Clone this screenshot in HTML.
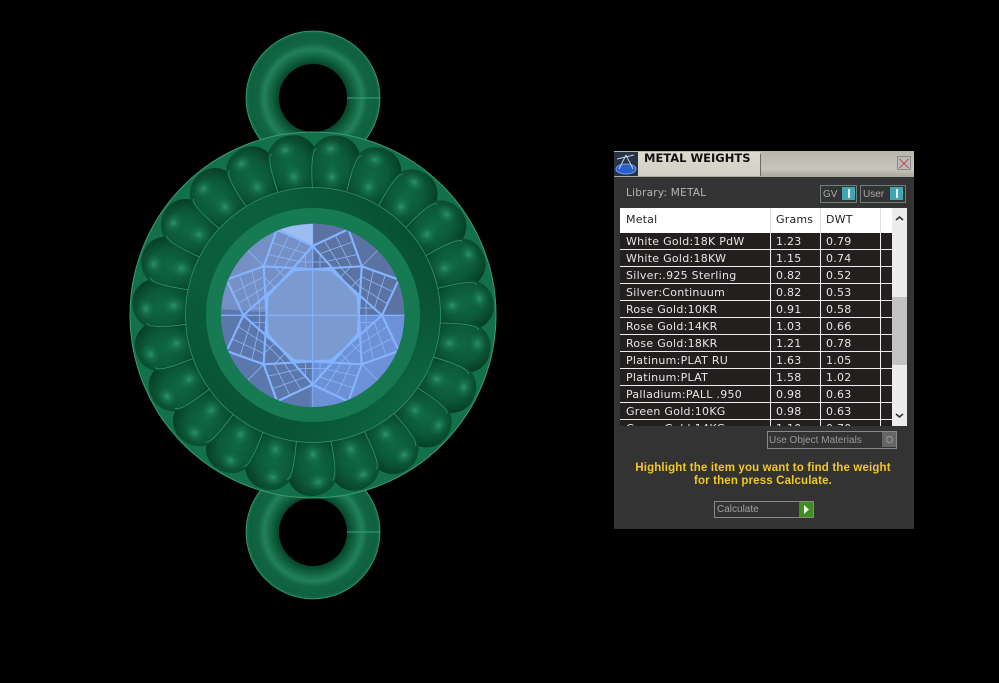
<!DOCTYPE html>
<html><head><meta charset="utf-8"><style>
html,body{margin:0;padding:0;background:#000;width:999px;height:683px;overflow:hidden}
.a{position:absolute}
#p{left:614px;top:151px;width:300px;height:378px;background:#333;font-family:"DejaVu Sans",sans-serif;overflow:hidden}
.t{position:absolute;white-space:nowrap;line-height:14px}
.r{position:absolute;left:6px;width:272px;height:16px;background:#231f1e;border-bottom:1px solid #eee;color:#e6e6e6;font-size:11px;line-height:16px;letter-spacing:.27px}
.r span{position:absolute;top:1px;white-space:nowrap}
.r i{position:absolute;top:0;width:1px;height:17px;background:#eee}
</style></head><body>
<svg class="a" style="left:0;top:0" width="999" height="683" viewBox="0 0 999 683">
<defs>
<radialGradient id="tor1" cx="313" cy="98" r="67" gradientUnits="userSpaceOnUse">
<stop offset=".5" stop-color="#06422a"/><stop offset=".6" stop-color="#0e5f3e"/><stop offset=".73" stop-color="#23815a"/><stop offset=".82" stop-color="#116545"/><stop offset=".95" stop-color="#0e6040"/><stop offset="1" stop-color="#14744c"/>
</radialGradient>
<radialGradient id="tor2" cx="313" cy="532" r="67" gradientUnits="userSpaceOnUse">
<stop offset=".5" stop-color="#06422a"/><stop offset=".6" stop-color="#0e5f3e"/><stop offset=".73" stop-color="#23815a"/><stop offset=".82" stop-color="#116545"/><stop offset=".95" stop-color="#0e6040"/><stop offset="1" stop-color="#14744c"/>
</radialGradient>
<radialGradient id="bd" cx=".42" cy=".47" r=".66">
<stop offset="0" stop-color="#0f6843"/><stop offset=".5" stop-color="#0c5a39"/><stop offset=".8" stop-color="#07452b"/><stop offset="1" stop-color="#04331e"/>
</radialGradient>
<radialGradient id="hl"><stop offset="0" stop-color="#2f9a70" stop-opacity=".9"/><stop offset=".5" stop-color="#1f8058" stop-opacity=".45"/><stop offset="1" stop-color="#1a7a50" stop-opacity="0"/></radialGradient>
<linearGradient id="bz" x1="0" y1="0" x2="1" y2="1">
<stop offset="0" stop-color="#0b5f3c"/><stop offset=".45" stop-color="#0b5f3c"/><stop offset=".7" stop-color="#0a5836"/><stop offset="1" stop-color="#11734a"/>
</linearGradient>
<linearGradient id="bz2" x1="1" y1="0" x2="0" y2="1">
<stop offset="0" stop-color="#043c25" stop-opacity=".95"/><stop offset=".45" stop-color="#0b5f3c" stop-opacity="0"/><stop offset="1" stop-color="#05452b" stop-opacity=".8"/>
</linearGradient>
<linearGradient id="bi" x1="0" y1="0" x2="1" y2="1">
<stop offset="0" stop-color="#177a52"/><stop offset=".6" stop-color="#167a52"/><stop offset="1" stop-color="#15754e"/>
</linearGradient>
<clipPath id="ann"><circle cx="313" cy="315" r="181"/></clipPath>
<clipPath id="wedge"><path d="M313 315L274 18L141 69Z"/></clipPath>
<clipPath id="gc"><circle cx="0" cy="0" r="275"/></clipPath>
<g id="b">
<g transform="rotate(-11 313 160)">
<rect x="288" y="134" width="50" height="62" rx="24" fill="url(#bd)"/>
<ellipse cx="309" cy="147" rx="11" ry="9" fill="url(#hl)"/>
<ellipse cx="309" cy="175" rx="10" ry="11" fill="url(#hl)"/>
<path d="M295 146 Q288 148 289 192" fill="none" stroke="#2f9a70" stroke-width=".8"/>
</g>
</g>
<g id="sec" fill="none" stroke="#84b4ff">
<g stroke-width="6.5">
<path d="M0-208 L137-54 M0-208 L-137-54 M0-208 L102-256 M0-208 L-102-256"/>
</g>
<g stroke-width="2.4" stroke="#8cb6f6">
<path d="M0-208V-275"/>
<path d="M34-224L87-141 M68-240L117-144 M19-184L117-219 M38-161L132-182"/>
<path d="M-22-138V-186 M22-138V-186 M-45-160H45"/>
</g>
</g>
</defs>

<!-- top and bottom loops -->
<circle cx="313" cy="98" r="67" fill="url(#tor1)" stroke="#3f9a72" stroke-width=".8"/>
<circle cx="313" cy="98" r="34" fill="#000"/>
<path d="M347 98H380" stroke="#3f9d74" stroke-width="1"/>
<circle cx="313" cy="532" r="67" fill="url(#tor2)" stroke="#3f9a72" stroke-width=".8"/>
<circle cx="313" cy="532" r="34" fill="#000"/>
<path d="M347 532H380" stroke="#3f9d74" stroke-width="1"/>

<!-- body -->
<circle cx="313" cy="315" r="183" fill="#12714a" stroke="#3f9a72" stroke-width="1"/>
<g clip-path="url(#ann)">
<use href="#b" transform="rotate(-7.4 313 315)"/>
<use href="#b" transform="rotate(8.25 313 315)"/>
<use href="#b" transform="rotate(23.9 313 315)"/>
<use href="#b" transform="rotate(39.55 313 315)"/>
<use href="#b" transform="rotate(55.2 313 315)"/>
<use href="#b" transform="rotate(70.85 313 315)"/>
<use href="#b" transform="rotate(86.5 313 315)"/>
<use href="#b" transform="rotate(102.15 313 315)"/>
<use href="#b" transform="rotate(117.8 313 315)"/>
<use href="#b" transform="rotate(133.45 313 315)"/>
<use href="#b" transform="rotate(149.1 313 315)"/>
<use href="#b" transform="rotate(164.75 313 315)"/>
<use href="#b" transform="rotate(180.4 313 315)"/>
<use href="#b" transform="rotate(196.05 313 315)"/>
<use href="#b" transform="rotate(211.7 313 315)"/>
<use href="#b" transform="rotate(227.35 313 315)"/>
<use href="#b" transform="rotate(243 313 315)"/>
<use href="#b" transform="rotate(258.65 313 315)"/>
<use href="#b" transform="rotate(274.3 313 315)"/>
<use href="#b" transform="rotate(289.95 313 315)"/>
<use href="#b" transform="rotate(305.6 313 315)"/>
<use href="#b" transform="rotate(321.25 313 315)"/>
<use href="#b" transform="rotate(336.9 313 315)"/>
<g clip-path="url(#wedge)"><use href="#b" transform="rotate(-7.4 313 315)"/></g>
</g>
<circle cx="313" cy="315" r="127.5" fill="url(#bz)" stroke="#2f9169" stroke-width=".8"/>
<circle cx="313" cy="315" r="127" fill="url(#bz2)"/>
<circle cx="313" cy="315" r="107" fill="url(#bi)"/>

<!-- gem -->
<g transform="translate(312.7 315.3) scale(.3333)">
<g clip-path="url(#gc)">
<circle r="280" fill="#6480b6"/>
<path d="M0 0L0-300L300-300L300 0Z" fill="#5a73a3"/>
<path d="M0 0L300 0L300 300L0 300Z" fill="#6c91d6"/>
<path d="M0 0L-10 300L-300 300L-300-20Z" fill="#5c77ac"/>
<path d="M0 0L-300-20L-300-300L0-300Z" fill="#7490c6"/>
<path d="M0-275L0-210L-100-250L-130-260Z" fill="#9dbcf2"/>
<path d="M-57-138L57-138L137-54L137 59L57 139L-57 139L-137 59L-137-54Z" fill="#7a9ad0"/>
<use href="#sec"/>
<use href="#sec" transform="rotate(45)"/>
<use href="#sec" transform="rotate(90)"/>
<use href="#sec" transform="rotate(135)"/>
<use href="#sec" transform="rotate(180)"/>
<use href="#sec" transform="rotate(225)"/>
<use href="#sec" transform="rotate(270)"/>
<use href="#sec" transform="rotate(315)"/>
<path d="M0-208V208M-275 0H275" stroke="#82b2ff" stroke-width="3.5" fill="none"/>
</g>
</g>
</svg>

<div id="p" class="a">
<!-- title bar -->
<div class="a" style="left:0;top:0;width:300px;height:26px;background:linear-gradient(#b8b6aa,#c8c6ba 70%,#a8a69a)"></div>
<div class="a" style="left:24px;top:1px;width:122px;height:24px;background:linear-gradient(#dcdad0,#d2d0c4)"></div>
<div class="a" style="left:146px;top:3px;width:1px;height:22px;background:#6a6a60"></div>
<div class="t" style="left:30px;top:0;font:bold 11.5px/14px 'DejaVu Sans',sans-serif;color:#111">METAL WEIGHTS</div>
<div class="a" style="left:283px;top:5px;width:12px;height:12px;background:#bbb;border:1px solid #888"></div>
<svg class="a" style="left:0;top:0" width="300" height="26">
<rect x="0" y="1" width="24" height="24" fill="#283242"/>
<ellipse cx="12" cy="18" rx="10" ry="5" fill="#2a5ec8" stroke="#6f9fff" stroke-width="1"/>
<path d="M12 4L5 18M12 4L19 18M3 8L20 4" stroke="#b8d0f0" stroke-width="1" fill="none"/>
<path d="M285.5 8L294.5 17M294.5 8L285.5 17" stroke="#c04a4a" stroke-width="1"/>
</svg>
<div class="t" style="left:12px;top:35px;font-size:10.5px;color:#b4b4b4;letter-spacing:.22px">Library: METAL</div>

<!-- toggles -->
<div class="a" style="left:206px;top:34px;width:35px;height:16px;border:1px solid #6f7f7f"></div>
<div class="t" style="left:209px;top:37px;font:10px/14px 'Liberation Sans',sans-serif;color:#aaa">GV</div>
<div class="a" style="left:228px;top:36px;width:13px;height:13px;background:#3fa7ad"></div>
<div class="a" style="left:234px;top:38px;width:2px;height:9px;background:#eef"></div>
<div class="a" style="left:246px;top:34px;width:44px;height:16px;border:1px solid #6f7f7f"></div>
<div class="t" style="left:249px;top:37px;font:10px/14px 'Liberation Sans',sans-serif;color:#aaa">User</div>
<div class="a" style="left:276px;top:36px;width:13px;height:13px;background:#3fa7ad"></div>
<div class="a" style="left:282px;top:38px;width:2px;height:9px;background:#eef"></div>

<!-- table header -->
<div class="a" style="left:6px;top:57px;width:287px;height:25px;background:#fff"></div>
<div class="a" style="left:156px;top:57px;width:1px;height:25px;background:#ddd"></div>
<div class="a" style="left:206px;top:57px;width:1px;height:25px;background:#ddd"></div>
<div class="a" style="left:266px;top:57px;width:1px;height:25px;background:#ddd"></div>
<div class="t" style="left:12px;top:62px;font-size:11px;color:#222;letter-spacing:.2px">Metal</div>
<div class="t" style="left:162px;top:62px;font-size:11px;color:#222;letter-spacing:.2px">Grams</div>
<div class="t" style="left:212px;top:62px;font-size:11px;color:#222;letter-spacing:.2px">DWT</div>

<!-- rows -->
<div class="a" style="left:0;top:82px;width:300px;height:193px;overflow:hidden">
<div class="r" style="top:0"><span style="left:6px">White Gold:18K PdW</span><i style="left:150px"></i><span style="left:156px">1.23</span><i style="left:200px"></i><span style="left:206px">0.79</span><i style="left:260px"></i></div>
<div class="r" style="top:17px"><span style="left:6px">White Gold:18KW</span><i style="left:150px"></i><span style="left:156px">1.15</span><i style="left:200px"></i><span style="left:206px">0.74</span><i style="left:260px"></i></div>
<div class="r" style="top:34px"><span style="left:6px">Silver:.925 Sterling</span><i style="left:150px"></i><span style="left:156px">0.82</span><i style="left:200px"></i><span style="left:206px">0.52</span><i style="left:260px"></i></div>
<div class="r" style="top:51px"><span style="left:6px">Silver:Continuum</span><i style="left:150px"></i><span style="left:156px">0.82</span><i style="left:200px"></i><span style="left:206px">0.53</span><i style="left:260px"></i></div>
<div class="r" style="top:68px"><span style="left:6px">Rose Gold:10KR</span><i style="left:150px"></i><span style="left:156px">0.91</span><i style="left:200px"></i><span style="left:206px">0.58</span><i style="left:260px"></i></div>
<div class="r" style="top:85px"><span style="left:6px">Rose Gold:14KR</span><i style="left:150px"></i><span style="left:156px">1.03</span><i style="left:200px"></i><span style="left:206px">0.66</span><i style="left:260px"></i></div>
<div class="r" style="top:102px"><span style="left:6px">Rose Gold:18KR</span><i style="left:150px"></i><span style="left:156px">1.21</span><i style="left:200px"></i><span style="left:206px">0.78</span><i style="left:260px"></i></div>
<div class="r" style="top:119px"><span style="left:6px">Platinum:PLAT RU</span><i style="left:150px"></i><span style="left:156px">1.63</span><i style="left:200px"></i><span style="left:206px">1.05</span><i style="left:260px"></i></div>
<div class="r" style="top:136px"><span style="left:6px">Platinum:PLAT</span><i style="left:150px"></i><span style="left:156px">1.58</span><i style="left:200px"></i><span style="left:206px">1.02</span><i style="left:260px"></i></div>
<div class="r" style="top:153px"><span style="left:6px">Palladium:PALL .950</span><i style="left:150px"></i><span style="left:156px">0.98</span><i style="left:200px"></i><span style="left:206px">0.63</span><i style="left:260px"></i></div>
<div class="r" style="top:170px"><span style="left:6px">Green Gold:10KG</span><i style="left:150px"></i><span style="left:156px">0.98</span><i style="left:200px"></i><span style="left:206px">0.63</span><i style="left:260px"></i></div>
<div class="r" style="top:187px"><span style="left:6px">Green Gold:14KG</span><i style="left:150px"></i><span style="left:156px">1.10</span><i style="left:200px"></i><span style="left:206px">0.70</span><i style="left:260px"></i></div>
</div>

<!-- scrollbar -->
<div class="a" style="left:278px;top:57px;width:15px;height:218px;background:#ececec"></div>
<div class="a" style="left:278px;top:146px;width:15px;height:68px;background:#c2c2c2"></div>
<svg class="a" style="left:278px;top:57px" width="15" height="218">
<path d="M4 12L7.5 9L11 12" fill="none" stroke="#333" stroke-width="1.6"/>
<path d="M4 206L7.5 209L11 206" fill="none" stroke="#333" stroke-width="1.6"/>
</svg>

<!-- use object materials -->
<div class="a" style="left:153px;top:280px;width:128px;height:16px;border:1px solid #888"></div>
<div class="t" style="left:155px;top:283px;font:10px/14px 'Liberation Sans',sans-serif;color:#999">Use Object Materials</div>
<div class="a" style="left:268px;top:281px;width:14px;height:15px;background:#666"></div>
<div class="a" style="left:272px;top:285px;width:5px;height:5px;border:1px solid #999;border-radius:50%"></div>

<!-- message -->
<div class="t" style="left:-1px;width:300px;top:311px;text-align:center;font:bold 11.5px/13px 'Liberation Sans',sans-serif;color:#f0c828;letter-spacing:.15px">Highlight the item you want to find the weight<br>for then press Calculate.</div>

<!-- calculate -->
<div class="a" style="left:100px;top:350px;width:98px;height:15px;border:1px solid #888"></div>
<div class="t" style="left:103px;top:352px;font:10px/14px 'Liberation Sans',sans-serif;color:#a0a0a0">Calculate</div>
<div class="a" style="left:185px;top:351px;width:14px;height:15px;background:#3f8f20"></div>
<svg class="a" style="left:185px;top:351px" width="14" height="15"><path d="M5 3L10 7.5L5 12Z" fill="#eee"/></svg>
</div>
</body></html>
